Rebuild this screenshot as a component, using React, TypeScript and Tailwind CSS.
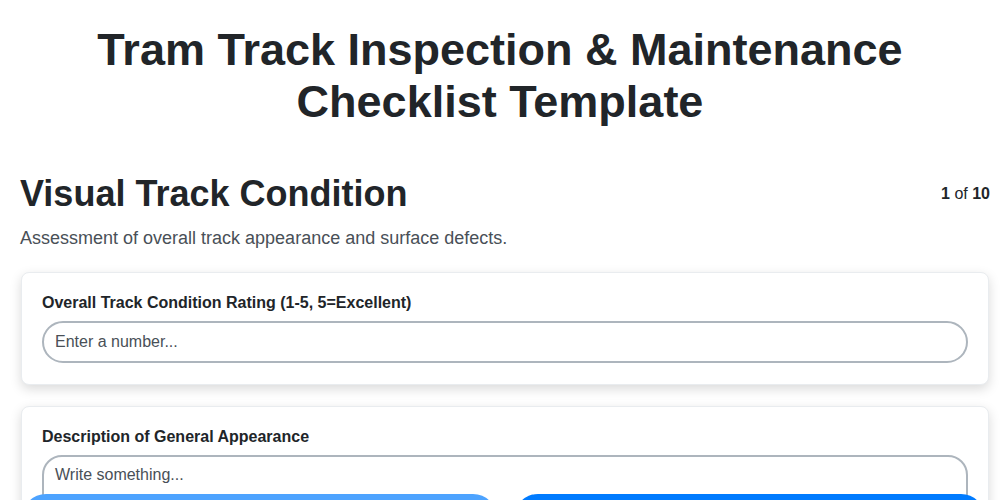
import React, { useState } from 'react';

export default function App() {
  const [rating, setRating] = useState('');
  const [desc, setDesc] = useState('');

  return (
    <div className="min-h-screen w-full bg-white font-['Liberation_Sans',Arial,sans-serif] text-[#212529]">
      <h1 className="pt-6 text-center text-[45px] font-bold leading-[52px] px-20">
        Tram Track Inspection &amp; Maintenance Checklist Template
      </h1>

      <div className="mt-[44px] pl-5 pr-[10px]">
        <div className="flex items-center justify-between">
          <h2 className="text-[36px] font-bold leading-[44px]">Visual Track Condition</h2>
          <div className="text-[16px]">
            <span className="font-bold">1</span> of <span className="font-bold">10</span>
          </div>
        </div>
        <p className="mt-[10px] text-[18px] leading-[24px] text-[#495057]">
          Assessment of overall track appearance and surface defects.
        </p>

        <div className="mt-[22px] flex flex-col gap-[21px]">
          <div className="mx-[1px] rounded-lg border border-[#e9ecef] bg-white px-5 pt-[18px] pb-[21px] shadow-[0_4px_12px_rgba(0,0,0,0.15)]">
            <label className="block text-[16px] font-bold leading-6">
              Overall Track Condition Rating (1-5, 5=Excellent)
            </label>
            <input
              type="number"
              value={rating}
              onChange={(e) => setRating(e.target.value)}
              placeholder="Enter a number..."
              className="mt-[6px] h-[42px] w-full rounded-full border-2 border-[#adb5bd] px-[11px] text-[16px] text-[#212529] placeholder-[#495057] outline-none"
            />
          </div>

          <div className="mx-[1px] rounded-lg border border-[#e9ecef] bg-white px-5 pt-[18px] pb-5 shadow-[0_4px_12px_rgba(0,0,0,0.15)]">
            <label className="block text-[16px] font-bold leading-6">
              Description of General Appearance
            </label>
            <textarea
              value={desc}
              onChange={(e) => setDesc(e.target.value)}
              placeholder="Write something..."
              rows={4}
              className="mt-[6px] block w-full resize-none rounded-[20px] border-2 border-[#adb5bd] px-[11px] py-[6px] text-[16px] text-[#212529] placeholder-[#495057] outline-none"
            />
          </div>
        </div>
      </div>

      <div className="fixed left-[22px] top-[494px] flex gap-[17px]">
        <button className="h-12 w-[475px] rounded-full bg-[#4da3ff] text-[16px] font-bold text-white">
          Previous
        </button>
        <button className="h-12 w-[471px] rounded-full bg-[#007bff] text-[16px] font-bold text-white">
          Next
        </button>
      </div>
    </div>
  );
}
